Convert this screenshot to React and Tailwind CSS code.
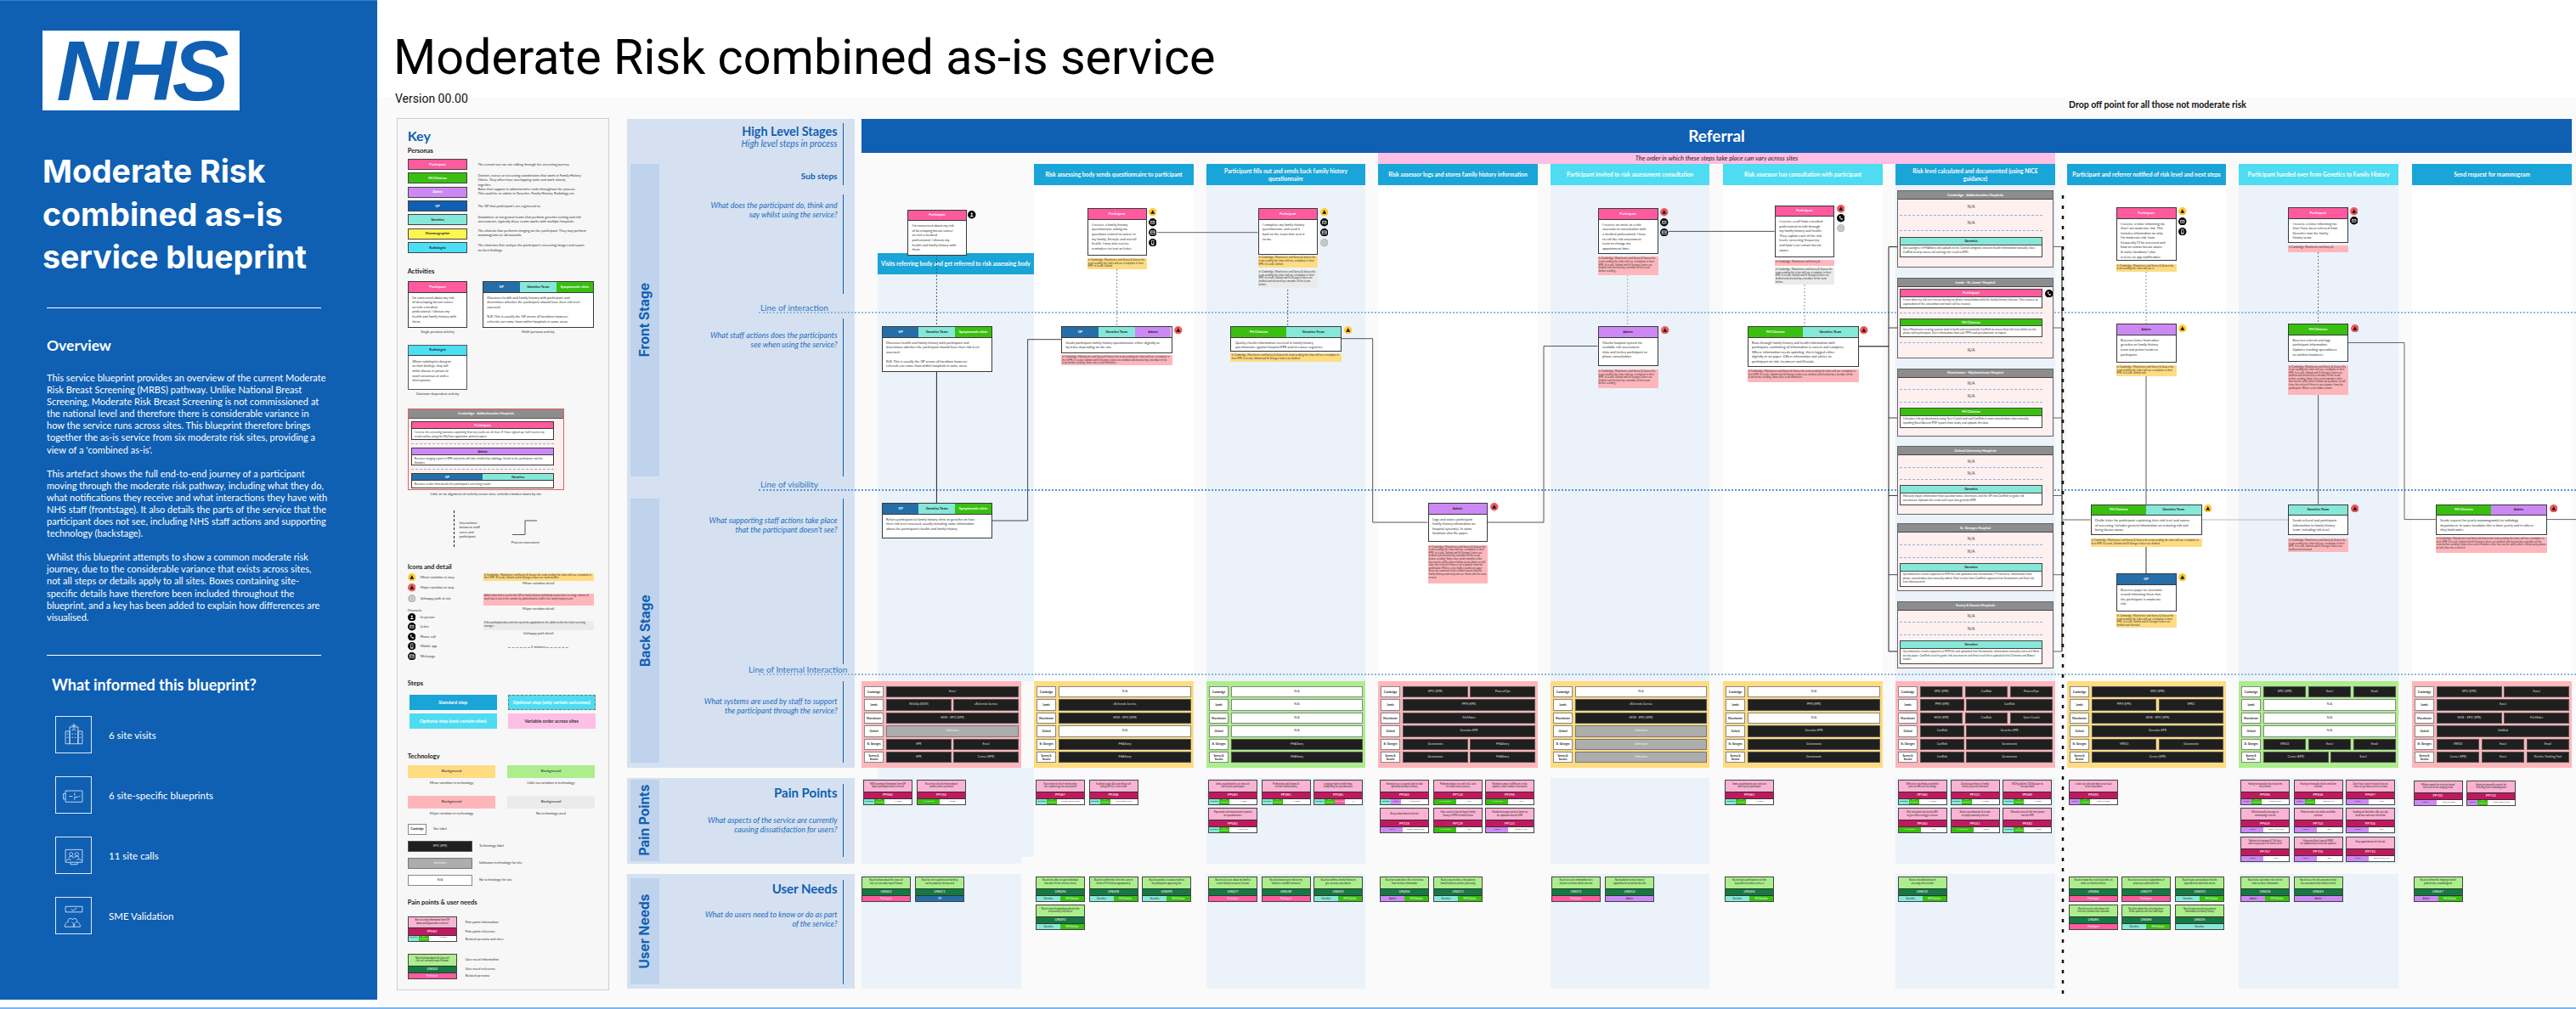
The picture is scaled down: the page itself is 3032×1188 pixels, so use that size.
const OX = 444;
const OY = 115;
const at = (x, y, w, h) => ({ left: x - OX, top: y - OY, width: w, height: h });

const PERSONA = {
  P: ["Participant", "bg-[#ff5a9d] text-white"],
  F: ["FH Clinician", "bg-[#39bf10] text-white"],
  A: ["Admin", "bg-[#cc89f5] text-[#222]"],
  G: ["GP", "bg-[#266ea8] text-white"],
  T: ["Genetics Team", "bg-[#86e8d8] text-[#222]"],
  N: ["Genetics", "bg-[#86e8d8] text-[#222]"],
  S: ["Symptomatic clinic", "bg-[#39bf10] text-white"],
};

function Lines({ lines }) {
  return lines.map((l, i) => (
    <span key={i} className="block whitespace-nowrap min-h-[1px]">
      {l || "\u00a0"}
    </span>
  ));
}

function Card({ heads, lines, hh = 12.5, small, className = "" }) {
  return (
    <div className={`flex flex-col h-full bg-white border border-[#3a3a3a] ${className}`}>
      <div className="flex shrink-0 border-b border-[#3a3a3a]" style={{ height: hh }}>
        {heads.map((k) => (
          <div key={k} className={`flex-1 flex items-center justify-center text-[4px] font-bold whitespace-nowrap ${PERSONA[k][1]}`}>
            {PERSONA[k][0]}
          </div>
        ))}
      </div>
      {small ? (
        <div className="px-[3px] pt-[2px] text-[3.300px] leading-[4.300px] text-[#333]">{lines.join(" ")}</div>
      ) : (
        <div className="px-[4.5px] pt-[3px] text-[4px] leading-[5.6px] text-[#333]">
          <Lines lines={lines} />
        </div>
      )}
    </div>
  );
}

const NOTE_BG = { y: "bg-[#ffdc82]", r: "bg-[#ffb6bb]", g: "bg-[#ebebeb]" };

function Note({ tone, children }) {
  return <div className={`h-full px-[1px] pt-[1px] text-[3px] leading-[3.6px] text-[#333] ${NOTE_BG[tone]}`}>{children}</div>;
}

function Dot({ kind, size = 9.5 }) {
  const fill = kind === "warn" ? "#ffcb33" : kind === "major" ? "#ee5a5f" : kind === "grey" ? "#bcbcbc" : "#050505";
  return (
    <svg width={size} height={size} viewBox="0 0 10 10" className="block">
      <circle cx="5" cy="5" r="5" fill={fill} />
      {(kind === "warn" || kind === "major") && <path d="M5 2.4 7.6 7H2.4z" fill="#111" />}
      {kind === "grey" && <circle cx="5" cy="5" r="2.2" fill="none" stroke="#e8e8e8" strokeWidth=".7" />}
      {kind === "letter" && <path d="M2.6 3.5h4.8v3.2H2.6zM2.6 3.6 5 5.4l2.4-1.8" fill="none" stroke="#fff" strokeWidth=".7" />}
      {kind === "web" && <path d="M2.4 3h5.2v4H2.4zM2.4 4.6h5.2" fill="none" stroke="#fff" strokeWidth=".8" />}
      {kind === "mobile" && <path d="M3.7 2.2h2.6v5.6H3.7zM3.7 6.7h2.6" fill="none" stroke="#fff" strokeWidth=".7" />}
      {kind === "phone" && <path d="M3.3 2.6c-.6 2 1.6 4.6 3.7 4.6l.3-1.3-1.3-.6-.5.6C4.800 5.500 4.400 5 4.200 4.200l.7-.4-.4-1.400z" fill="#fff" />}
      {kind === "person" && <path d="M5 2.500a1.200 1.200 0 1 1-.01 0zM2.900 7.400c.2-2.200 4-2.200 4.200 0z" fill="#fff" />}
    </svg>
  );
}

const CHIP = {
  T: ["Genetics", "bg-[#86e8d8] text-[#222]"],
  F: ["FH Clinician", "bg-[#39bf10] text-white"],
  A: ["Admin", "bg-[#cc89f5] text-[#222]"],
  P: ["Participant", "bg-[#ff5a9d] text-white"],
  G: ["GP", "bg-[#266ea8] text-white"],
};

function PainCard({ text, code, tags, site }) {
  return (
    <div className="flex flex-col h-[30px] w-[58px] border border-[#444] bg-white">
      <div className="flex h-[12.5px] flex-col items-center justify-center bg-[#fbb3d3] text-[2.7px] leading-[3.6px] text-[#222] text-center">
        <Lines lines={text} />
      </div>
      <div className="flex h-[9.5px] items-center justify-center border-y border-[#333] bg-[#c2185f] text-[4px] text-white">
        {code}
      </div>
      <div className="flex flex-1 text-[2.5px] leading-[2.8px]">
        {[...tags].map((k) => (
          <div key={k} className={`flex items-center justify-center text-center ${tags.length > 1 ? "w-[12px]" : "w-[26px]"} ${CHIP[k][1]}`}>
            {CHIP[k][0]}
          </div>
        ))}
        <div className="flex-1 flex items-center justify-center whitespace-nowrap text-[#333]">{site}</div>
      </div>
    </div>
  );
}

function NeedCard({ text, code, tags }) {
  return (
    <div className="flex flex-col h-[30.500px] w-[58px] border border-[#444] bg-white">
      <div className="flex h-[13px] flex-col items-center justify-center bg-[#aced8c] text-[2.7px] leading-[3.6px] text-[#222] text-center">
        <Lines lines={text} />
      </div>
      <div className="flex h-[9.5px] items-center justify-center border-y border-[#333] bg-[#137a42] text-[4px] text-white">
        {code}
      </div>
      <div className="flex flex-1 text-[2.8px]">
        {[...tags].map((k) => (
          <div key={k} className={`flex-1 flex items-center justify-center whitespace-nowrap ${CHIP[k][1]}`}>
            {CHIP[k][0]}
          </div>
        ))}
      </div>
    </div>
  );
}

const SITES = ["Cambridge", "Leeds", "Manchester", "Oxford", "St. Georges", "Surrey & Sussex"];

const COLS = [
  { x: 1014, w: 188, blue: true, tone: "r", sub: "", pain: true, need: true, tech: [["Excel"], ["WinDip (EDM)", "eReferrals Service"], ["HIVE - EPIC (EPR)"], ["?"], ["EPR", "Excel"], ["EPR", "Cerner (EPR)"]] },
  { x: 1217, w: 188, tone: "y", sub: "Risk assessing body sends questionnaire to participant", tech: [["N/A"], ["eReferrals Service"], ["HIVE - EPIC (EPR)"], ["N/A"], ["FHAStory"], ["FHAStory"]] },
  { x: 1420, w: 187, blue: true, tone: "g", pain: true, need: true, sub: "Participant fills out and sends back family history\nquestionnaire", tech: [["N/A"], ["N/A"], ["N/A"], ["N/A"], ["FHAStory"], ["FHAStory"]] },
  { x: 1622, w: 188, tone: "r", sub: "Risk assessor logs and stores family history information", tech: [["EPIC (EPR)", "ProcessTips"], ["PPM (EPR)"], ["FileMaker"], ["Genetics EPR"], ["Genomonix", "FHAStory"], ["Genomonix", "FHAStory"]] },
  { x: 1825, w: 187, blue: true, opt: true, tone: "y", pain: true, need: true, sub: "Participant invited to risk assessment consultation", tech: [["N/A"], ["eReferrals Service"], ["HIVE - EPIC (EPR)"], ["?"], ["?"], ["?"]] },
  { x: 2028, w: 188, opt: true, tone: "y", sub: "Risk assessor has consultation with participant", tech: [["N/A"], ["PPM (EPR)"], ["N/A"], ["Genetics EPR"], ["Genomonix"], ["Genomonix"]] },
  { x: 2231, w: 188, blue: true, tone: "r", pain: true, need: true, sub: "Risk level calculated and documented (using NICE\nguidance)", tech: [["EPIC (EPR)", "CanRisk", "ProcessTips"], ["PPM (EPR)", { t: "CanRisk", g: 2 }], ["HIVE (EPR)", "CanRisk", "Tyrer-Cuzick"], ["CanRisk", { t: "Genetics EPR", g: 2 }], ["CanRisk", { t: "Genomonix", g: 2 }], ["CanRisk", { t: "Genomonix", g: 2 }]] },
  { x: 2433, w: 187, tone: "y", sub: "Participant and referrer notified of risk level and next steps", tech: [["EPIC (EPR)"], ["PPM (EPR)", "EPR3"], ["HIVE - EPIC (EPR)"], ["Genetics EPR"], ["MRIS3", "Genomonix"], ["Cerner (EPR)"]] },
  { x: 2635, w: 188, blue: true, opt: true, tone: "g", pain: true, need: true, sub: "Participant handed over from Genetics to Family History", tech: [["EPIC (EPR)", "Excel", "Email"], ["N/A"], ["N/A"], ["N/A"], ["MRIS3", "Excel", "Email"], ["Cerner (EPR)", "Excel"]] },
  { x: 2839, w: 188, tone: "r", sub: "Send request for mammogram", tech: [["EPIC (EPR)", "Excel"], ["Excel"], ["HIVE - EPIC (EPR)", "FileMaker"], ["InfoRad"], ["MRIS3", "Excel", "Email"], ["Cerner (EPR)", "Excel", "Decline Tracking Tool"]] },
];

function TechCell({ c }) {
  const name = typeof c === "string" ? c : c.t;
  const g = typeof c === "string" ? 1 : c.g;
  const cls =
    name === "N/A"
      ? "bg-white border-[#888] text-[#333]"
      : name === "?"
        ? "bg-[#adadad] border-[#777] text-[#eee]"
        : "bg-[#1f1f1f] border-[#555] text-[#ddd]";
  return (
    <div className={`flex min-w-0 items-center justify-center border text-[3.500px] whitespace-nowrap ${cls}`} style={{ flexGrow: g, flexBasis: 0 }}>
      {name === "?" ? "Unknown" : name}
    </div>
  );
}

function TechTable({ col }) {
  const bg = col.tone === "r" ? "bg-[#ffb6bb]" : col.tone === "y" ? "bg-[#ffdc82]" : "bg-[#aced8c]";
  return (
    <div className={`flex h-[102px] flex-col gap-[2.150px] px-[3px] pt-[6px] ${bg}`}>
      {col.tech.map((row, i) => (
        <div key={i} className="flex h-[13.300px] gap-[3px]">
          <div className="flex w-[23px] shrink-0 items-center justify-center border border-[#888] bg-white text-center text-[3.200px] leading-[4px] font-bold text-[#222]">
            {SITES[i]}
          </div>
          <div className="flex flex-1 gap-[2.500px]">
            {row.map((c, j) => (
              <TechCell key={j} c={c} />
            ))}
          </div>
        </div>
      ))}
    </div>
  );
}

function Lane({ col, prev }) {
  const gap = prev ? col.x - prev.x - prev.w : 0;
  const head = col.opt ? "bg-[#4ddcf2]" : "bg-[#19a5d8]";
  const fill = col.sub === "" ? "" : col.blue ? "bg-[#ebf2fa]" : "bg-white";
  return (
    <div className="flex flex-col" style={{ width: col.w, marginLeft: gap }}>
      <div className={`flex h-[25px] items-center justify-center whitespace-pre-line text-center text-[6.700px] leading-[9px] font-bold text-white ${col.sub ? head : ""}`}>
        {col.sub}
      </div>
      <div className={`h-[584px] ${fill}`} />
      <TechTable col={col} />
      <div className={`mt-[12px] h-[101px] ${col.pain ? "bg-[#ebf2fa]" : ""}`} />
      <div className={`mt-[12px] h-[135px] ${col.need ? "bg-[#ebf2fa]" : ""}`} />
    </div>
  );
}

const ASK = "text-[9px] leading-[11.300px] italic text-[#1f6cc0] whitespace-nowrap";
const STAGE = "-rotate-90 whitespace-nowrap text-[15.500px] font-bold text-[#0f5fb3] font-['Inter',sans-serif]";

function LabelBlock({ h, pt, children }) {
  return (
    <div className="flex flex-col items-end border-r-[1.500px] border-[#0f5fb3] pr-[6.500px] text-right" style={{ height: h, paddingTop: pt }}>
      {children}
    </div>
  );
}

function Labels() {
  return (
    <div className="flex w-[268px] shrink-0 flex-col">
      <div className="flex h-[764px] bg-[#d5e1f1]">
        <div className="ml-[4px] flex w-[34px] flex-col pt-[53px]">
          <div className="flex h-[368px] items-center justify-center bg-[#bfd3ec]">
            <span className={STAGE}>Front Stage</span>
          </div>
          <div className="mt-[26px] flex h-[311px] items-center justify-center bg-[#bfd3ec]">
            <span className={STAGE}>Back Stage</span>
          </div>
        </div>
        <div className="flex w-[217px] flex-col pt-[5px]">
          <LabelBlock h={73} pt={1}>
            <span className="text-[14.400px] leading-[18px] font-bold text-[#0f5fb3] whitespace-nowrap">High Level Stages</span>
            <span className="text-[10.500px] leading-[11px] italic text-[#1f6cc0] whitespace-nowrap">High level steps in process</span>
            <span className="mt-[26px] text-[10px] leading-[12px] font-bold text-[#0f5fb3] whitespace-nowrap">Sub steps</span>
          </LabelBlock>
          <div className="h-[11px]" />
          <LabelBlock h={117} pt={7}>
            <span className={ASK}>What does the participant do, think and</span>
            <span className={ASK}>say whilst using the service?</span>
          </LabelBlock>
          <div className="h-[29px] pl-[119px] pt-[10px] text-[10px] leading-[12px] text-[#2f77c4] whitespace-nowrap">Line of interaction</div>
          <LabelBlock h={186} pt={14}>
            <span className={ASK}>What staff actions does the participants</span>
            <span className={ASK}>see when using the service?</span>
          </LabelBlock>
          <div className="h-[26px] pl-[119px] pt-[3px] text-[10px] leading-[12px] text-[#2f77c4] whitespace-nowrap">Line of visibility</div>
          <LabelBlock h={194.500} pt={20}>
            <span className={ASK}>What supporting staff actions take place</span>
            <span className={ASK}>that the participant doesn't see?</span>
          </LabelBlock>
          <div className="h-[20px] pl-[105px] text-[10px] leading-[12px] text-[#2f77c4] whitespace-nowrap">Line of Internal Interaction</div>
          <LabelBlock h={96.500} pt={18}>
            <span className={ASK}>What systems are used by staff to support</span>
            <span className={ASK}>the participant through the service?</span>
          </LabelBlock>
        </div>
      </div>
      <div className="mt-[12px] flex h-[101px] bg-[#d5e1f1] pt-[2px]">
        <div className="ml-[4px] flex h-[96px] w-[34px] items-center justify-center bg-[#bfd3ec]">
          <span className={STAGE}>Pain Points</span>
        </div>
        <div className="w-[217px] pt-[5px]">
          <LabelBlock h={86} pt={0}>
            <span className="text-[15px] leading-[20px] font-bold text-[#0f5fb3]">Pain Points</span>
            <span className={`mt-[17px] ${ASK}`}>What aspects of the service are currently</span>
            <span className={ASK}>causing dissatisfaction for users?</span>
          </LabelBlock>
        </div>
      </div>
      <div className="mt-[12px] flex h-[135px] bg-[#d5e1f1] pt-[5px]">
        <div className="ml-[4px] flex h-[125px] w-[34px] items-center justify-center bg-[#bfd3ec]">
          <span className={STAGE}>User Needs</span>
        </div>
        <div className="w-[217px] pt-[2px]">
          <LabelBlock h={123} pt={0}>
            <span className="text-[15px] leading-[20px] font-bold text-[#0f5fb3]">User Needs</span>
            <span className={`mt-[15px] ${ASK}`}>What do users need to know or do as part</span>
            <span className={ASK}>of the service?</span>
          </LabelBlock>
        </div>
      </div>
    </div>
  );
}

function Blueprint() {
  return (
    <div className="ml-[21.300px] mt-[1px] flex">
      <Labels />
      <div className="ml-[8px] flex w-[2013px] flex-col">
        <div className="flex h-[40px] items-center justify-center bg-[#0f5fb3] text-[19px] font-bold text-white">Referral</div>
        <div className="ml-[608px] flex h-[13px] w-[797px] items-center justify-center bg-[#fdbfe5] text-[7.500px] italic text-[#222]">
          The order in which these steps take place can vary across sites
        </div>
        <div className="flex">
          {COLS.map((c, i) => (
            <Lane key={c.x} col={c} prev={COLS[i - 1]} />
          ))}
        </div>
      </div>
    </div>
  );
}

const KT = "text-[4px] leading-[5.600px] text-[#333] whitespace-nowrap";
const KH = "text-[7.500px] leading-[8px] font-bold text-[#222]";
const CAP = "text-center text-[4px] leading-[6px] text-[#333] whitespace-nowrap";

const KEY_PERSONAS = [
  ["Participant", "bg-[#ff5a9d] text-white", 3.5, ["The central user we are talking through the screening journey."]],
  ["FH Clinician", "bg-[#39bf10] text-white", 0.2, ["Doctors, nurses or screening coordinators that work at Family History", "Clinics. They often have overlapping tasks and work closely", "together."]],
  ["Admin", "bg-[#cc89f5] text-white", 0.2, ["Roles that support in administrative tasks throughout the process.", "This could be an admin in Genetics, Family History, Radiology etc."]],
  ["GP", "bg-[#0f5fb3] text-white", 3.9, ["The GP that participant's are registered to."]],
  ["Genetics", "bg-[#86e8d8] text-[#222]", 0.2, ["Standalone or integrated teams that perform genetics testing and risk", "assessments, typically these teams works with multiple hospitals."]],
  ["Mammographer", "bg-[#fff550] text-[#222]", 0, ["The clinician that performs imaging on the participant. They may perform", "mammograms or ultrasounds."]],
  ["Radiologist", "bg-[#4bdff5] text-[#222]", 1, ["The clinicians that analyse the participant's screening images and report", "on their findings."]],
];

function ChannelRow({ kind, label, mt = 0 }) {
  return (
    <div className="flex items-center gap-[5.500px]" style={{ marginTop: mt }}>
      <Dot kind={kind} />
      <span className={KT}>{label}</span>
    </div>
  );
}

function Tone({ bg, label, caption }) {
  return (
    <div className="flex w-[103.500px] flex-col items-center">
      <div className={`flex h-[15px] w-full items-center justify-center text-[4.500px] text-[#222] ${bg}`}>{label}</div>
      <div className={`${CAP} mt-[3px]`}>{caption}</div>
    </div>
  );
}

function KeyPanel() {
  return (
    <div className="flex h-[1027px] w-[250px] shrink-0 flex-col border-[1.500px] border-[#cfcfcf] bg-[#f7f7f7] pl-[12px] pt-[10px]">
      <div className="text-[16px] leading-[20px] font-bold text-[#0f5fb3]">Key</div>
      <div className={`${KH} mt-[4px]`}>Personas</div>
      <div className="mt-[5px] flex flex-col gap-[3.350px]">
        {KEY_PERSONAS.map(([n, c, pt, lines]) => (
          <div key={n} className="flex h-[13px] gap-[12px]">
            <div className={`flex h-[13px] w-[70.700px] shrink-0 items-center justify-center border border-[#444] text-[4px] font-bold ${c}`}>{n}</div>
            <div className={KT} style={{ paddingTop: pt }}>
              <Lines lines={lines} />
            </div>
          </div>
        ))}
      </div>
      <div className={`${KH} mt-[18px]`}>Activities</div>
      <div className="mt-[7px] flex gap-[17.300px]">
        <div className="flex w-[70.700px] flex-col items-center">
          <div className="h-[54.700px] w-full">
            <Card heads={["P"]} lines={["I'm concerned about my risk", "of developing breast cancer", "so visit a medical", "professional. I discuss my", "health and family history with", "them."]} />
          </div>
          <div className={`${CAP} mt-[2px]`}>Single persona activity</div>
        </div>
        <div className="flex w-[131.300px] flex-col items-center">
          <div className="h-[54.700px] w-full">
            <Card heads={["G", "T", "S"]} lines={["Discusses health and family history with participant and", "determines whether the participant should have their risk level", "assessed.", "", "N.B. This is usually the GP across all locations however", "referrals can come from within hospitals in some areas"]} />
          </div>
          <div className={`${CAP} mt-[2px]`}>Multi-persona activity</div>
        </div>
      </div>
      <div className="mt-[12px] flex w-[70.700px] flex-col items-center">
        <div className="h-[53px] w-full">
          <div className="flex h-full flex-col border border-[#555] bg-white">
            <div className="flex h-[12px] shrink-0 items-center justify-center border-b border-[#3a3a3a] bg-[#4bdff5] text-[4px] font-bold text-[#222]">Radiologist</div>
            <div className="px-[4.500px] pt-[4px] text-[4px] leading-[5.600px] italic text-[#333]">
              <Lines lines={["Where radiologists disagree", "on their findings, they will", "either discuss in person to", "reach consensus or seek a", "third opinion."]} />
            </div>
          </div>
        </div>
        <div className={`${CAP} mt-[2px]`}>Outcome-dependent activity</div>
      </div>
      <div className="mt-[14px] flex h-[96.300px] w-[184.700px] flex-col border border-[#e06060] bg-[#fff0f0]">
        <div className="flex h-[11px] shrink-0 items-center justify-center border-b border-[#555] bg-[#8d8d8d] text-[4px] font-bold text-white">Cambridge - Addenbrookes Hospitals</div>
        <div className="flex flex-col pt-[3px]">
          <div className="ml-[3px] h-[22px] w-[168.700px]"><Card small hh={8.500} heads={["P"]} lines={["I receive the screening outcome explaining that my results are all clear. If I have signed up, I will receive my results online using the MyChart app before printed copies."]} /></div>
          <div className="ml-[3px] mt-[4px] w-[168.700px] border-t border-dashed border-[#8ab4dc]" />
          <div className="ml-[3px] mt-[4px] h-[21px] w-[168.700px]"><Card small hh={8.500} heads={["A"]} lines={["Receives imaging report in EPR and prints off letter drafted by radiology. Sends to the participant, not the bloodies."]} /></div>
          <div className="ml-[3px] mt-[4px] w-[168.700px] border-t border-dashed border-[#8ab4dc]" />
          <div className="ml-[3px] mt-[4px] h-[18.500px] w-[168.700px]"><Card small hh={8.500} heads={["G", "N"]} lines={["Receives a letter that details the participant's screening results."]} /></div>
        </div>
      </div>
      <div className={`${CAP} mt-[1.500px] w-[184.700px]`}>Little or no alignment of activity across sites, activities broken down by site</div>
      <div className="mt-[16px] flex h-[43px]">
        <div className="ml-[54px] h-full border-l border-dashed border-[#222]" />
        <div className={`${KT} ml-[6px] mt-[12px]`}>
          <Lines lines={["Interactions", "between staff", "users and", "participant"]} />
        </div>
        <div className="ml-[37px] flex flex-col items-center">
          <svg width="30" height="19" viewBox="0 0 30 19" className="mt-[11px]">
            <path d="M29 1H15V17.500H0" fill="none" stroke="#555" strokeWidth="1" />
          </svg>
          <div className={`${CAP} mt-[5px]`}>Process movement</div>
        </div>
      </div>
      <div className={`${KH} mt-[20px]`}>Icons and detail</div>
      <div className="mt-[3px] flex">
        <div className="flex w-[89px] flex-col">
          <ChannelRow kind="warn" label="Minor variation at step" />
          <ChannelRow kind="major" label="Major variation at step" mt={3} />
          <ChannelRow kind="grey" label="Unhappy path at site" mt={3} />
          <div className={`${KT} mt-[7px]`}>Channels:</div>
          <ChannelRow kind="person" label="In-person" />
          <ChannelRow kind="letter" label="Letter" mt={2} />
          <ChannelRow kind="phone" label="Phone call" mt={2} />
          <ChannelRow kind="mobile" label="Mobile app" mt={2} />
          <ChannelRow kind="web" label="Web page" mt={2} />
        </div>
        <div className="flex w-[130px] flex-col items-center">
          <div className="h-[9.500px] w-full"><Note tone="y">In Cambridge, Manchester and Surrey &amp; Sussex the team sending the letter will use a template in their EPR. In Leeds, Oxford and St Georges letters are hand-written.</Note></div>
          <div className={CAP}>Minor variation detail</div>
          <div className="mt-[9px] h-[14px] w-full"><Note tone="r">Admin data that is used in the GP or family history and bloods teams there is a large volume of work that is less in the number by administrative staff in the family history team.</Note></div>
          <div className={`${CAP} mt-[1px]`}>Major variation detail</div>
          <div className="mt-[11px] h-[11px] w-full"><Note tone="g">If the participant does not turn up to the appointment, the admin or the the letter receiving manager.</Note></div>
          <div className={`${CAP} mt-[1px]`}>Unhappy path detail</div>
          <div className="mt-[10px] flex w-[71px] items-center gap-[1px] text-[4px] leading-[6px] text-[#333]">
            <div className="flex-1 border-t border-dashed border-[#999]" />
            <span>5 minutes</span>
            <div className="flex-1 border-t border-dashed border-[#999]" />
          </div>
        </div>
      </div>
      <div className={`${KH} mt-[24px]`}>Steps</div>
      <div className="mt-[9px] ml-[2px] grid w-[219px] grid-cols-[103px_103px] gap-x-[13px] gap-y-[4.500px] text-[5.500px] font-bold">
        <div className="flex h-[17.500px] items-center justify-center bg-[#19a5d8] text-white">Standard step</div>
        <div className="flex h-[17.500px] items-center justify-center border border-dashed border-[#777] bg-[#4ddcf2] text-white">Optional step (only certain outcomes)</div>
        <div className="flex h-[17.500px] items-center justify-center bg-[#4ddcf2] text-white">Optional step (only certain sites)</div>
        <div className="flex h-[17.500px] items-center justify-center bg-[#fdbfe5] text-[#333]">Variable order across sites</div>
      </div>
      <div className={`${KH} mt-[29px]`}>Technology</div>
      <div className="mt-[6px] grid w-[221px] grid-cols-[104px_104px] gap-x-[13px] gap-y-[12px]">
        <Tone bg="bg-[#ffdc82]" label="Background" caption="Minor variation in technology" />
        <Tone bg="bg-[#aced8c]" label="Background" caption="Little/no variation in technology" />
        <Tone bg="bg-[#ffb6bb]" label="Background" caption="Major variation in technology" />
        <Tone bg="bg-[#ebebeb]" label="Background" caption="No technology used" />
      </div>
      <div className="mt-[9px] flex h-[13px] items-center gap-[7.500px]">
        <div className="flex h-[13px] w-[22.700px] items-center justify-center border border-[#888] bg-white text-[3.200px] font-bold text-[#222]">Cambridge</div>
        <span className={KT}>Site label</span>
      </div>
      {[
        ["EPIC (EPR)", "bg-[#1f1f1f] border-[#555] text-[#ddd]", "Technology label"],
        ["Unknown", "bg-[#adadad] border-[#777] text-[#eee]", "Unknown technology for site"],
        ["N/A", "bg-white border-[#888] text-[#333]", "No technology for site"],
      ].map(([t, c, l]) => (
        <div key={t} className="mt-[7px] flex h-[13px] items-center gap-[7.500px]">
          <div className={`flex h-[13px] w-[76.700px] items-center justify-center border text-[3.500px] ${c}`}>{t}</div>
          <span className={KT}>{l}</span>
        </div>
      ))}
      <div className={`${KH} mt-[16px]`}>Pain points &amp; user needs</div>
      <div className="mt-[12px] flex gap-[10px]">
        <PainCard text={["Not receiving information from GP", "about participant when referred"]} code="PP082" tags="TF" site="All Sites" />
        <div className={`${KT} flex flex-col pt-[4px]`}>
          <span>Pain point information</span>
          <span className="mt-[5.500px]">Pain point reference</span>
          <span className="mt-[3.500px]">Related persona and sites</span>
        </div>
      </div>
      <div className="mt-[14px] flex gap-[10px]">
        <NeedCard text={["Need to know about the issues of", "risk, so I can make myself known"]} code="UN002" tags="P" />
        <div className={`${KT} flex flex-col pt-[4px]`}>
          <span>User need information</span>
          <span className="mt-[5.500px]">User need reference</span>
          <span className="mt-[3px]">Related persona</span>
        </div>
      </div>
    </div>
  );
}

const CARDS = [
  { b: [1068, 246.7, 70, 54], h: ["P"], l: ["I'm concerned about my risk", "of developing breast cancer", "so visit a medical", "professional. I discuss my", "health and family history with", "them."] },
  { b: [1037.6, 384, 130.2, 54], h: ["G", "T", "S"], l: ["Discusses health and family history with participant and", "determines whether the participant should have their risk level", "assessed.", "", "N.B. This is usually the GP across all locations however", "referrals can come from within hospitals in some areas"] },
  { b: [1037.6, 592, 130.2, 41.5], h: ["G", "T", "S"], l: ["Refers participant to family history clinic or genetics to have", "their risk level assessed, usually including some information", "about the participant's health and family history"] },
  { b: [1279.5, 245.3, 70, 56], h: ["P"], l: ["I receive a family history", "questionnaire asking me", "questions related to cancer in", "my family, lifestyle and overall", "health. I may also receive", "reminders via text or letter."] },
  { b: [1249, 384, 130.5, 31.6], h: ["G", "T", "A"], l: ["Sends participant family history questionnaire either digitally or", "by letter depending on the site."] },
  { b: [1480.5, 245.3, 70.5, 54.4], h: ["P"], l: ["I complete my family history", "questionnaire and send it", "back to the team that sent it", "to me."] },
  { b: [1448.4, 384, 130.6, 30], h: ["F", "T"], l: ["Quality checks information received in family history", "questionnaire against hospital EPR and/or cancer registries"] },
  { b: [1680.5, 592, 70, 46], h: ["A"], l: ["Logs and stores participant", "family history information on", "hospital system(s). In some", "locations also file paper."] },
  { b: [1880.5, 245.3, 71, 54], h: ["P"], l: ["I receive an invite to a risk", "assessment consultation with", "a medical professional. I have", "to call the risk assessment", "team to change my", "appointment time."] },
  { b: [1880.5, 384, 71, 47], h: ["A"], l: ["Checks hospital system for", "available risk assessment", "slots and invites participant to", "phone consultation."] },
  { b: [2088.7, 241.6, 70.5, 61.2], h: ["P"], l: ["I receive a call from a medical", "professional to talk through", "my family history and health.", "They explain each of the risk", "levels, screening frequency", "and how I can remain breast", "aware."] },
  { b: [2056.5, 384, 131.2, 47.5], h: ["F", "T"], l: ["Runs through family history and health information with", "participant, confirming all information is correct and complete.", "Where information needs updating, this is logged either", "digitally or on paper. Offers information and advice to", "participant on risk, treatment and lifestyle."] },
  { b: [2490.5, 244, 71, 63], h: ["P"], l: ["I receive a letter informing me", "that I am moderate risk. This", "includes information on why", "I'm moderate risk, how", "frequently I'll be screened and", "how to remain breast aware.", "In some locations I also", "receive an app notification."] },
  { b: [2490.5, 381.4, 71, 45.3], h: ["A"], l: ["Receives letter from other", "genetics or family history", "team and prints/sends to", "participant."] },
  { b: [2460.5, 593.7, 131, 36.3], h: ["F", "T"], l: ["Drafts letter for participant explaining their risk level and course", "of screening. Includes general information on reducing risk and", "being breast aware."] },
  { b: [2490.5, 675, 71, 45], h: ["G"], l: ["Receives paper or electronic", "record informing them that", "the participant is moderate", "risk."] },
  { b: [2693, 244, 71, 41.6], h: ["P"], l: ["I receive a letter informing me", "that I have been referred from", "Genetics into the family", "history team."] },
  { b: [2693, 381.4, 71, 44.6], h: ["F"], l: ["Receives referral and logs", "participant information.", "Updates tracking spreadsheet", "to confirm handover."] },
  { b: [2693, 593.7, 71, 36.3], h: ["T"], l: ["Sends referral and participant", "information to family history", "team, including risk level."] },
  { b: [2866.8, 593.7, 131, 36.3], h: ["F", "A"], l: ["Sends request for yearly mammogram(s) to radiology", "department. In some locations this is done yearly and in others", "they hold order."] },
];

const NOTE_TEXT =
  "In Cambridge, Manchester and Surrey & Sussex the team sending the letter will use a template in their EPR. In Leeds, Oxford and St Georges letters are drafted and checked by a member of the team before sending. Some sites send reminders after four weeks, while others follow up by phone or will close the referral if there is no response from the participant. Where a site holds records on paper these are scanned in later, which means that the family history team may not see them until the next review meeting. The volume of referrals also varies across locations and the timing of this step can shift as a result of this. Details are recorded differently at each site and in different systems which means that manual copying between records is often required. Staffing levels change how quickly the team can respond to participants and in some cases another clinician will check the details first. Admin staff usually hold this process together at smaller locations.";

// rows of 3px text that fit the note, cut on a word
const noteText = (w, n) => {
  const max = Math.floor((w - 2) / 1.6) * n;
  const cut = NOTE_TEXT.slice(0, max);
  return cut.slice(0, cut.lastIndexOf(" ")) + ".";
};

const NOTES = [
  [1279.5, 304, 70, 13, "y", 3],
  [1249, 418, 130.5, 12, "r", 3],
  [1480.5, 301.4, 70.5, 13.6, "y", 3],
  [1480.5, 318.3, 70.5, 20.3, "g", 5],
  [1448.4, 416, 130.6, 10.4, "y", 2],
  [1680.5, 641.7, 70, 45.3, "r", 12],
  [1880.5, 302.4, 71, 21.6, "r", 5],
  [1880.5, 435, 71, 21.5, "r", 5],
  [2088.7, 305.8, 70.5, 7.2, "r", 1],
  [2088.7, 315.3, 70.5, 19.7, "g", 5],
  [2056.5, 435, 131.2, 15, "r", 3],
  [2490.5, 310.5, 71, 9.5, "y", 2],
  [2490.5, 430, 71, 13, "y", 3],
  [2460.5, 634, 131, 10, "y", 2],
  [2490.5, 723, 71, 16, "y", 4],
  [2693, 288.8, 71, 8.2, "r", 1],
  [2693, 429.5, 71, 35.5, "r", 9],
  [2693, 634, 71, 15.5, "r", 4],
  [2866.8, 632, 131, 18.5, "r", 4],
];

const DOTS = [
  [1144, 253, "person"],
  [1356.5, 249.7, "warn"], [1356.5, 262, "letter"], [1356.5, 273.7, "web"], [1356.5, 285.5, "mobile"],
  [1387, 388.6, "major"],
  [1558.6, 249.7, "warn"], [1558.6, 262, "letter"], [1558.6, 273.7, "web"], [1558.6, 286, "grey"],
  [1587, 388.6, "warn"],
  [1759, 597, "major"],
  [1959, 250, "major"], [1959, 262, "letter"], [1959, 273.4, "web"],
  [1960, 388.6, "major"],
  [2166.7, 246, "major"], [2166.7, 257, "phone"], [2166.7, 268.6, "grey"],
  [2194, 388.6, "major"],
  [2411.3, 345.3, "phone"],
  [2569, 248.8, "warn"], [2569, 260.7, "letter"], [2569, 272.3, "mobile"], [2569, 386.3, "warn"],
  [2598.6, 598.6, "warn"], [2568.6, 680, "warn"],
  [2770.5, 248.8, "major"], [2770.5, 260, "letter"], [2771.4, 386.3, "major"],
  [2771.4, 598.6, "major"], [3005.5, 598.6, "major"],
];

const SITE_CARDS = [
  { y: 224.3, h: 90.7, name: "Cambridge - Addenbrookes Hospitals", slots: [{ na: 18.3 }, { na: 18 }, { gap: 7.7 }, { c: ["N"], h: 23.3, l: "Uses pedigree in FHAStory and uploads to the Canrisk alongside consent/health information manually. Uses CanRisk to help assess risk and logs the result in EPIC." }] },
  { y: 327, h: 95.3, name: "Leeds - St. James' Hospital", slots: [{ gap: 2.3 }, { c: ["P"], h: 22.4, l: "I learn what my risk level means during my phone consultation with the family history clinician. This ensures an explanation of the calculation and how I will be treated." }, { dash: 12.6 }, { c: ["F"], h: 22.4, l: "Uses Manchester scoring system (tool in built) and occasionally Conflink to assess final risk level whilst on the phone with participant. Uses information from call, PPM and questionnaire as inputs." }, { na: 17, dashTop: true }] },
  { y: 433.7, h: 79.9, name: "Manchester - Wythenshawe Hospital", slots: [{ na: 14.6 }, { na: 15 }, { gap: 6 }, { c: ["F"], h: 23.4, l: "Calculates risk predominately using Tyrer-Cuzick tool and Conflink in most consultations (also manually inputting Excel/Access) PDF reports from study, and uploads this data." }] },
  { y: 525, h: 80.8, name: "Oxford University Hospitals", slots: [{ na: 15.3 }, { na: 14 }, { gap: 6 }, { c: ["N"], h: 23.3, l: "Manually inputs information from question notes, interviews, and the GP into Conflink to guide risk assessment. Uploads the result and is put into genetics EPR." }] },
  { y: 616.3, h: 79.7, name: "St. Georges Hospital", slots: [{ na: 14.7 }, { na: 15.5 }, { gap: 5.9 }, { c: ["N"], h: 27.3, l: "Questionnaire results exported as PDF file and uploaded into Genomonix (7-9 minutes). Information from phone consultation also manually added. Final results from Conflink exported into Genomonix and final risk level documented." }] },
  { y: 707.5, h: 79.3, name: "Surrey & Sussex Hospitals", slots: [{ na: 14.8 }, { na: 14.7 }, { gap: 6.3 }, { c: ["N"], h: 27.3, l: "Questionnaire results exported as PDF file and uploaded into Genomonix, information manually entered if filled out by paper. Conflink used to guide risk assessment and final result then uploaded into Clinicom and Bowel Locker." }] },
];

function SiteCard({ card }) {
  return (
    <div className="absolute flex flex-col border-[1.500px] border-[#666] bg-[#fff0f0]" style={at(2232.7, card.y, 184.6, card.h)}>
      <div className="flex h-[10px] shrink-0 items-center justify-center border-b border-[#444] bg-[#8d8d8d] text-[4px] font-bold text-white">{card.name}</div>
      <div className="flex w-[168.700px] ml-[2px] flex-col">
        {card.slots.map((s, i) => {
          if (s.gap) return <div key={i} style={{ height: s.gap }} />;
          if (s.dash) return <div key={i} className="border-b border-dashed border-[#8ab4dc] mb-[6px]" style={{ height: s.dash / 2 }} />;
          if (s.na)
            return (
              <div key={i} className={`flex items-center justify-center text-[4.800px] text-[#333] ${s.dashTop ? "mt-[6px] border-t border-dashed border-[#8ab4dc]" : "border-b border-dashed border-[#8ab4dc]"}`} style={{ height: s.na }}>
                N/A
              </div>
            );
          return (
            <div key={i} className="flex flex-col border border-[#444] bg-white" style={{ height: s.h }}>
              <div className={`flex h-[8.500px] shrink-0 items-center justify-center border-b border-[#444] text-[4px] font-bold ${PERSONA[s.c[0]][1]}`}>{PERSONA[s.c[0]][0]}</div>
              <div className="px-[3px] pt-[1.500px] text-[3.300px] leading-[4.300px] text-[#333]">{s.l}</div>
            </div>
          );
        })}
      </div>
    </div>
  );
}

const PAINS = [
  [1016, 918, ["NGS incoming information from GP", "about participant when referred"], "PP082", "TF", "All Sites"],
  [1079, 918, ["Receiving referrals from national", "sources when unrelated"], "PP194", "F", "Leeds"],
  [1219, 918, ["Receiving referrals if not meeting", "the required age for assessment"], "PP087", "TF", "Galder, Sth'd & Can"],
  [1281.5, 918, ["If patient under 40 send info or call", "asking GP to re-refer at 40"], "PP208", "TF", "Oxf, Galder, Man"],
  [1422, 918, ["Some questionnaires are not sent", "back by the participant"], "PP083", "TF", "All Sites"],
  [1484.6, 918, ["Participants don't know all", "relevant family history"], "PP085", "TF", "All Sites"],
  [1546, 918, ["Language barriers with those", "completing the questionnaire"], "PP080", "TFP", "All"],
  [1422, 951.4, ["Paperwork and manual work required", "for questionnaires"], "PP083", "TF", "Man & Oxf"],
  [1624, 918, ["Having to use a separate tool to look", "up family members history"], "PP083", "TA", "Man & Can"],
  [1687, 918, ["Problems where to send in list. Lack", "of reliable data recovery"], "PP134", "F", "Man"],
  [1748, 918, ["Reminder comes in different or late", "updates. Small number of accounts"], "PP296", "F", "Man"],
  [1624, 951.4, ["Keep carbon-based referrals"], "PP218", "A", "Galder, Sth'd Leeds"],
  [1687, 951.4, ["Have used an internal bag in family", "history in PPM to hold all data"], "PP129", "F", "Man"],
  [1748, 951.4, ["Hundred on paper process forms to", "be uploaded into the EPR"], "PP123", "A", "Leeds & Man"],
  [2030, 918, ["Some questionnaires are not sent", "back by the participant"], "PP083", "TF", "All Sites"],
  [2233.6, 918, ["Differences methods used whilst", "print on different line things"], "PP180", "TF", "All Sites"],
  [2295.6, 918, ["Detailed purchases in family", "history if person informed"], "PP321", "TF", "All Sites"],
  [2357.3, 918, ["NICE guideline CG164 open to", "interpretation"], "PP489", "TF", "All Sites"],
  [2233.6, 951.4, ["Risk calculators focused by BPs", "to give different bigger reviews"], "PP040", "F", "Man"],
  [2295.6, 951.4, ["Need a questionnaire & results", "of empty manually entered"], "PP041", "F", "Leeds"],
  [2357.3, 951.4, ["Manually entry of info into system", "into the EPR"], "PP482", "TF", "All Sites"],
  [2435, 918, ["Letters are directed where not need", "to be transcribed"], "PP490", "AF", "Sth'd & Leeds"],
  [2637, 918, ["Having to manually check systems", "for referrals"], "PP096", "AF", "Leeds & Surr"],
  [2699.5, 918, ["Having to manually check emails for", "referrals"], "PP836", "AF", "Sth'd & Mid"],
  [2761, 918, ["Don't have view in trusted, have to", "chase or get data sent to a record"], "PP697", "A", "Can"],
  [2637, 951.4, ["Want manually message to", "acknowledge referral"], "PP605", "A", "Sth'd, Mid & Can"],
  [2699.5, 951.4, ["Patients come via emails unreliable", "to know"], "PP703", "A", "StG"],
  [2761, 951.4, ["Sending via 2nd other after per day", "Send over and enter this fields"], "PP704", "A", "StG"],
  [2637, 985, ["Patients to transport 47-50 sites", "often say prepare for invites of all"], "PP707", "A", "StG"],
  [2699.5, 985, ["Using non-Excel copy of MRIS", "are approved by trusts, not updated"], "PP705", "A", "StG"],
  [2761, 985, ["Easy appointment of referrals"], "PP710", "A", "Sth'd & Can/Mid"],
  [2840.5, 919, ["Written words for referrals found", "delivered to the imaging team"], "PP701", "A", "Sth'd & Leeds"],
  [2903, 919, ["Having to manually request for", "Ordering future mammograms"], "PP722", "AF", "Leeds, Sth'd & Oxf"],
];

const NEEDS = [
  [1014, 1031.5, ["Need to know about the issues of", "risk, so I can make myself known"], "UN002", "P"],
  [1077, 1031.5, ["Need to refer a patients so that they", "can be properly risk assessed"], "UN011", "G"],
  [1219, 1031.5, ["Need to be able to report individual", "that don't fit the referral criteria"], "UN026", "TF"],
  [1281.5, 1031.5, ["Need to confirm that I'm in the current", "fields in FH clinician appropriately"], "UN028", "TF"],
  [1344, 1031.5, ["Need to provide a reassure helmets", "for participants appearing late"], "UN098", "TF"],
  [1219, 1064.7, ["Need a way of uploading patients info", "to accurately risk assess"], "UN092", "TF"],
  [1422, 1031.5, ["Need to feel sure about my families", "cancer history to assess relevant"], "UN027", "P"],
  [1484.6, 1031.5, ["Need to know to give info on my", "family in a suitable format to"], "UN028", "P"],
  [1546, 1031.5, ["Need to confirm a family history to", "give accurate assessment"], "UN030", "TF"],
  [1624, 1031.5, ["Need to record where the referral was", "from to share information"], "UN206", "AF"],
  [1687, 1031.5, ["Need a way to share a the patients", "family history to aid the processing"], "UN212", "TF"],
  [1826, 1031.5, ["Need to receive information via a", "channel at format which suits me"], "UN031", "P"],
  [1889, 1031.5, ["Need patients to have honest", "appointments to attend risk calls"], "UN014", "A"],
  [2030, 1031.5, ["Need to give participants real info", "dependent on what service is"], "UN304", "TF"],
  [2233.6, 1031.5, ["Need a streamlined way of", "accessing risk-relevant"], "UN032", "TF"],
  [2435, 1031.5, ["Need to know the result & benefits, to", "make an informed choice"], "UN084", "P"],
  [2497, 1031.5, ["Need access to clear explanations of", "processes and health info"], "UN079", "P"],
  [2560, 1031.5, ["Need to give personalised risk info", "dependent on what that means"], "UN010", "TF"],
  [2435, 1064.7, ["Need to receive info about risk", "level via a formal letter outcome"], "UN085", "P"],
  [2497, 1064.7, ["Need to inform the referring places", "of the patients risk level and steps"], "UN086", "TF"],
  [2560, 1064.7, ["Need to pass on risk assessment", "information to Family History"], "UN035", "T"],
  [2637, 1031.5, ["Need to be sent where the referral", "from, to share information"], "UN036", "AF"],
  [2699.5, 1031.5, ["Need to see the risk assessment that", "the assessment that had been held"], "UN045", "A"],
  [2840.5, 1031.5, ["Need to inform the imaging team of", "patients due a mammogram"], "UN047", "AF"],
];

const DOTTED = [
  [893, 367.6, "border-[#8fb8e0]"],
  [893, 577, "border-[#5b96d3]"],
  [893, 794, "border-[#8fb8e0]"],
];

const WIRES = [
  ["M1168 613H1209.600V399.700H1249", "#444", 1],
  ["M1102.400 438V592", "#222", 1],
  ["M1362 273.700H1480.500", "#666", 1],
  ["M1579 398.700H1615.700V615H1680.500", "#555", 1],
  ["M1750.500 615H1817V407.500H1880.500", "#555", 1],
  ["M1964 272.400H2088.700", "#555", 1],
  ["M2187.700 407.800H2223", "#555", 1.5],
  ["M2236 290.600H2223V767H2236", "#222", 1],
  ["M2223 386H2236M2223 492H2236M2223 583.500H2236M2223 676.700H2236", "#444", 1],
  ["M2404.700 290.500H2427M2404.700 386H2427M2404.700 492H2427M2404.700 583.500H2427M2404.700 676.700H2427M2404.700 767H2427", "#666", 1],
  ["M2427 290V767", "#555", 1.5],
  ["M2427 612H2460.500", "#999", 1.5],
  ["M2526 443V593.700", "#555", 1],
  ["M2526 644V675", "#333", 1],
  ["M2591.500 612H2693", "#bbb", 1],
  ["M2728.600 465V593.700", "#555", 1],
  ["M2764 403.500H2830V611.600H2866.800", "#666", 1],
  ["M2998 611.600H3032", "#666", 1],
];

const DASHES = [
  ["M1102.400 300V384", "#333"],
  ["M1314.700 317V384", "#666"],
  ["M1515.700 341V384", "#333"],
  ["M1915.700 324V384", "#999"],
  ["M2124 335V384", "#777"],
  ["M2526 320V381.400", "#777"],
  ["M2728.600 297V381.400", "#555"],
  ["M2322.700 362.700V375.300", "#555"],
];

function Diagram() {
  return (
    <>
      <div className="absolute bg-[#ebf2fa]" style={at(1033, 298, 184, 504)} />
      <div className="absolute bg-[#ebf2fa]" style={at(1033, 904, 184, 105)} />
      <div className="absolute flex items-center justify-center whitespace-nowrap bg-[#19a5d8] text-[6.700px] font-bold text-white" style={at(1033, 298, 184, 25)}>
        Visits referring body and get referred to risk assessing body
      </div>
      <div className="absolute text-[10.500px] leading-[12px] font-bold whitespace-nowrap text-[#111]" style={at(2435, 117, 230, 12)}>
        Drop off point for all those not moderate risk
      </div>
      {DOTTED.map(([x, y, c]) => (
        <div key={y} className={`absolute border-t-2 border-dotted ${c}`} style={at(x, y - 1, 3032 - x, 0)} />
      ))}
      <svg className="absolute left-0 top-0" width="2588" height="1073" viewBox="444 115 2588 1073">
        {WIRES.map(([d, c, w], i) => (
          <path key={i} d={d} fill="none" stroke={c} strokeWidth={w} />
        ))}
        {DASHES.map(([d, c], i) => (
          <path key={i} d={d} fill="none" stroke={c} strokeWidth="0.8" strokeDasharray="2 2" />
        ))}
        <path d="M2428 230V1178" fill="none" stroke="#111" strokeWidth="2.500" strokeDasharray="4 8" />
      </svg>
      {SITE_CARDS.map((c) => (
        <SiteCard key={c.y} card={c} />
      ))}
      {CARDS.map((c) => (
        <div key={c.b.join()} className="absolute" style={at(...c.b)}>
          <Card heads={c.h} lines={c.l} />
        </div>
      ))}
      {NOTES.map(([x, y, w, h, tone, n]) => (
        <div key={`${x}-${y}`} className="absolute" style={at(x, y, w, h)}>
          <Note tone={tone}>{noteText(w, n)}</Note>
        </div>
      ))}
      {DOTS.map(([x, y, k]) => (
        <div key={`${x}-${y}`} className="absolute" style={at(x - 4.75, y - 4.75, 9.5, 9.5)}>
          <Dot kind={k} />
        </div>
      ))}
      {PAINS.map(([x, y, t, c, tags, s]) => (
        <div key={`${x}-${y}`} className="absolute" style={at(x, y, 58, 30)}>
          <PainCard text={t} code={c} tags={tags} site={s} />
        </div>
      ))}
      {NEEDS.map(([x, y, t, c, tags]) => (
        <div key={`${x}-${y}`} className="absolute" style={at(x, y, 58, 30.5)}>
          <NeedCard text={t} code={c} tags={tags} />
        </div>
      ))}
    </>
  );
}

const PARAS = [
  ["This service blueprint provides an overview of the current Moderate", "Risk Breast Screening (MRBS) pathway. Unlike National Breast", "Screening, Moderate Risk Breast Screening is not commissioned at", "the national level and therefore there is considerable variance in", "how the service runs across sites. This blueprint therefore brings", "together the as-is service from six moderate risk sites, providing a", "view of a 'combined as-is'."],
  ["This artefact shows the full end-to-end journey of a participant", "moving through the moderate risk pathway, including what they do,", "what notifications they receive and what interactions they have with", "NHS staff (frontstage). It also details the parts of the service that the", "participant does not see, including NHS staff actions and supporting", "technology (backstage)."],
  ["Whilst this blueprint attempts to show a common moderate risk", "journey, due to the considerable variance that exists across sites,", "not all steps or details apply to all sites. Boxes containing site-", "specific details have therefore been included throughout the", "blueprint, and a key has been added to explain how differences are", "visualised."],
];

const INFORMED = [
  ["6 site visits", "M11 33V15h6v18M17 33V9h12v24M29 33V15h6v18M11 33h24M21 12h4M23 4v6M20 7h6M20 14h2M24 14h2M20 19h2M24 19h2M20 24h2M24 24h2M13 19h2M13 24h2M31 19h2M31 24h2"],
  ["6 site-specific blueprints", "M11 14h24v16H11zM8 18h3M8 26h3M8 18v8M16 22h5M24 17v4M24 27v-4h5M32 22h-2"],
  ["11 site calls", "M11 12h24v18H11zM18 30v3h10v-3M16 24a3 3 0 0 1 6 0M24 24a3 3 0 0 1 6 0M19 16a2.500 2.500 0 1 1-.01 0zM27 16a2.500 2.500 0 1 1-.01 0zM12 28c1-3 6-3 7-1M34 28c-1-3-6-3-7-1"],
  ["SME Validation", "M11 7h24v8H11zM19 11l3 2 5-4M10 36c0-5 3-7 5-7-2-4 4-7 6-3 2-4 8-1 6 3 2 0 5 2 5 7zM23 36c0-4-2-6-3-7M23 36c0-4 2-6 3-7"],
];

function Sidebar() {
  return (
    <div className="flex h-[1177px] w-[444px] shrink-0 flex-col border-t border-[#3d7fc6] bg-[#0f5fb3] pl-[50px] text-white">
      <div className="mt-[35px] flex h-[94px] w-[232px] items-center justify-center bg-white text-[100px] leading-[94px] font-bold italic tracking-[-4px] text-[#0f5fb3] font-['Liberation_Sans',sans-serif]">
        NHS
      </div>
      <h1 className="mt-[47px] text-[37.500px] leading-[50.500px] font-bold whitespace-nowrap font-['Inter',sans-serif]">
        <span className="block">Moderate Risk</span>
        <span className="block">combined as-is</span>
        <span className="block">service blueprint</span>
      </h1>
      <div className="ml-[5px] mt-[33px] h-[1.500px] w-[323px] bg-white" />
      <h2 className="ml-[5px] mt-[34px] text-[17.500px] leading-[20px] font-bold">Overview</h2>
      <div className="ml-[5px] mt-[21px] flex flex-col gap-[14px] text-[11.050px] leading-[14.100px]">
        {PARAS.map((p, i) => (
          <p key={i}>
            <Lines lines={p} />
          </p>
        ))}
      </div>
      <div className="ml-[5px] mt-[37px] h-[1.500px] w-[323px] bg-white" />
      <h2 className="ml-[11px] mt-[23px] text-[18px] leading-[22px] font-bold whitespace-nowrap">What informed this blueprint?</h2>
      <div className="ml-[15px] mt-[26px] flex flex-col gap-[27px]">
        {INFORMED.map(([label, d]) => (
          <div key={label} className="flex items-center gap-[20px]">
            <div className="flex h-[44px] w-[43px] items-center justify-center border-[1.500px] border-[#dfe9f5]">
              <svg width="38" height="38" viewBox="0 0 46 40">
                <path d={d} fill="none" stroke="#e3edf8" strokeWidth="1" />
              </svg>
            </div>
            <span className="text-[11.500px]">{label}</span>
          </div>
        ))}
      </div>
    </div>
  );
}

export default function App() {
  return (
    <div className="flex h-[1188px] w-[3032px] flex-col overflow-hidden bg-white font-['Lato',sans-serif]">
      <div className="flex h-[1186px]">
        <Sidebar />
        <div className="flex flex-1 flex-col">
          <div className="h-[115px] pl-[19px] pt-[38px]">
            <div className="text-[57.500px] leading-[60px] whitespace-nowrap text-black font-['Roboto',sans-serif]">Moderate Risk combined as-is service</div>
            <div className="relative z-10 ml-[2px] mt-[8px] text-[14px] leading-[20px] text-[#111] font-['Roboto',sans-serif]">Version 00.00</div>
          </div>
          <div className="relative flex-1 bg-[#fafafa] bg-[radial-gradient(#f0f0f0_0.5px,transparent_0.5px)] bg-[length:4px_4px]">
            <div className="flex pl-[22.700px] pt-[24px]">
              <KeyPanel />
              <Blueprint />
            </div>
            <Diagram />
          </div>
        </div>
      </div>
      <div className="h-[2px] bg-[#7ab8f5]" />
    </div>
  );
}
